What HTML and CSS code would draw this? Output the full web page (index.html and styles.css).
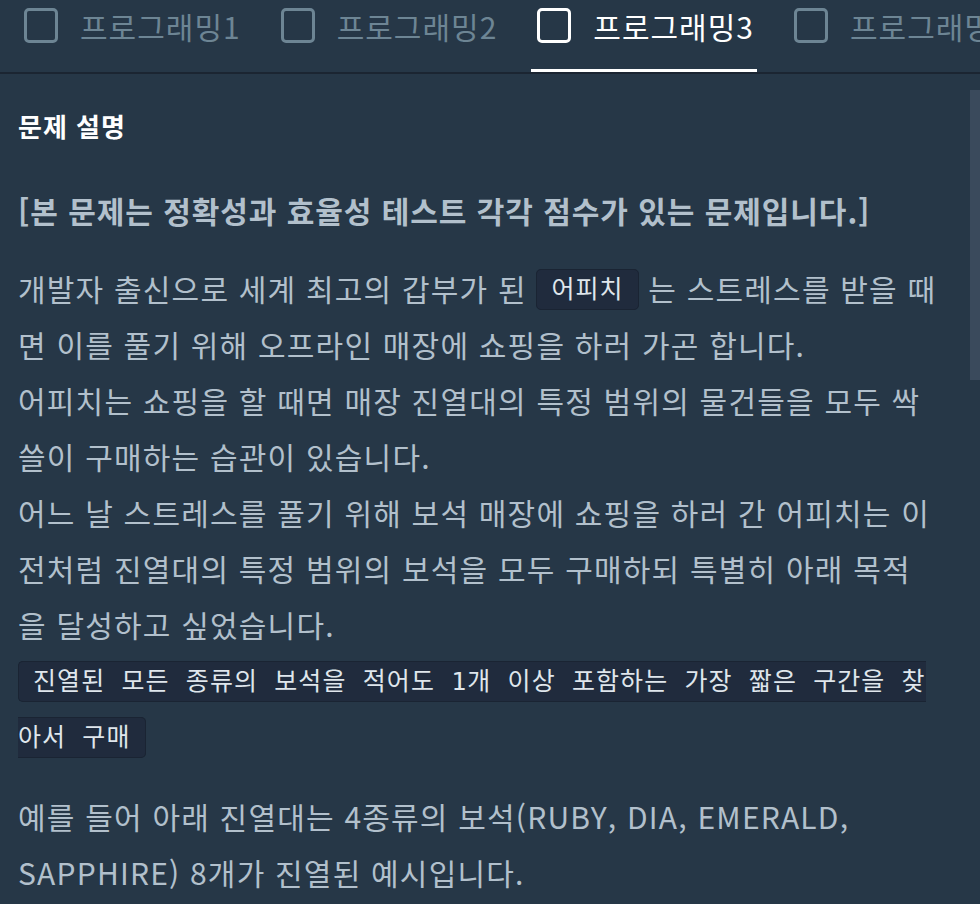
FILE: index.html
```html
<!DOCTYPE html>
<html lang="ko">
<head>
<meta charset="utf-8">
<link rel="stylesheet" href="styles.css">
</head>
<body>
<div class="page">
  <nav class="tabs">
    <div class="tab"><span class="box"></span><span class="tab-label">프로그래밍1</span></div>
    <div class="tab"><span class="box"></span><span class="tab-label">프로그래밍2</span></div>
    <div class="tab active"><span class="box"></span><span class="tab-label">프로그래밍3</span></div>
    <div class="tab"><span class="box"></span><span class="tab-label">프로그래밍4</span></div>
  </nav>
  <main class="content">
    <h5 class="title">문제 설명</h5>
    <p class="lead"><strong>[본 문제는 정확성과 효율성 테스트 각각 점수가 있는 문제입니다.]</strong></p>
    <p class="body">개발자 출신으로 세계 최고의 갑부가 된 <code>어피치</code> 는 스트레스를 받을 때면 이를 풀기 위해 오프라인 매장에 쇼핑을 하러 가곤 합니다.<br>어피치는 쇼핑을 할 때면 매장 진열대의 특정 범위의 물건들을 모두 싹쓸이 구매하는 습관이 있습니다.<br>어느 날 스트레스를 풀기 위해 보석 매장에 쇼핑을 하러 간 어피치는 이전처럼 진열대의 특정 범위의 보석을 모두 구매하되 특별히 아래 목적을 달성하고 싶었습니다.<br><code class="block">진열된 모든 종류의 보석을 적어도 1개 이상 포함하는 가장 짧은 구간을 찾아서 구매</code></p>
    <p class="body">예를 들어 아래 진열대는 4종류의 보석(RUBY, DIA, EMERALD, SAPPHIRE) 8개가 진열된 예시입니다.</p>
  </main>
  <div class="scrollbar"></div>
</div>
</body>
</html>
```
FILE: styles.css
```css
* { box-sizing: border-box; }
html, body { margin: 0; padding: 0; }
body {
  background: #263747;
  font-family: "Noto Sans CJK KR", "Noto Sans", sans-serif;
  color: #b2c0cc;
  overflow: hidden;
}
.page { position: relative; width: 980px; height: 904px; overflow: hidden; }
.tabs {
  display: flex;
  height: 74px;
  border-bottom: 2px solid #1b2532;
  padding-left: 18px;
  gap: 31px;
  white-space: nowrap;
  overflow: hidden;
}
.tab {
  display: flex;
  align-items: flex-start;
  padding: 8px 3px 0 6px;
  gap: 22px;
  color: #6d8594;
  font-size: 30px;
  letter-spacing: 1px;
  height: 74px;
  margin-bottom: -2px;
  flex: none;
}
.tab .box {
  width: 34px;
  height: 35px;
  border: 3px solid #6d8594;
  border-radius: 5px;
  flex: none;
}
.tab-label { line-height: 36px; }
.tab.active { color: #ffffff; border-bottom: 5px solid #ffffff; }
.tab.active .box { border-color: #ffffff; }
.content {
  padding: 18px 41px 0 18px;
}
.title {
  margin: 16px 0 38px;
  font-size: 26px;
  letter-spacing: 1px;
  line-height: 36px;
  font-weight: 700;
  color: #ffffff;
}
.lead {
  margin: 0 0 22px;
  font-size: 30px;
  letter-spacing: 0.95px;
  line-height: 56px;
}
.body {
  margin: 0 0 24px;
  font-size: 30px;
  letter-spacing: 1.2px;
  line-height: 56px;
}
code {
  font-family: "DejaVu Sans Mono", "Noto Sans CJK KR", monospace;
  font-size: 25px;
  letter-spacing: 1.1px;
  line-height: 1;
  vertical-align: 3px;
  color: #dfe6ec;
  background: #202b3d;
  border: 1px solid #1a2433;
  border-radius: 5px;
  padding: 5px 14px;
  -webkit-box-decoration-break: slice;
  box-decoration-break: slice;
}
code.block { white-space: pre-wrap; }
.scrollbar {
  position: absolute;
  right: 0;
  top: 90px;
  width: 10px;
  height: 290px;
  background: #3a4a5c;
}
```
